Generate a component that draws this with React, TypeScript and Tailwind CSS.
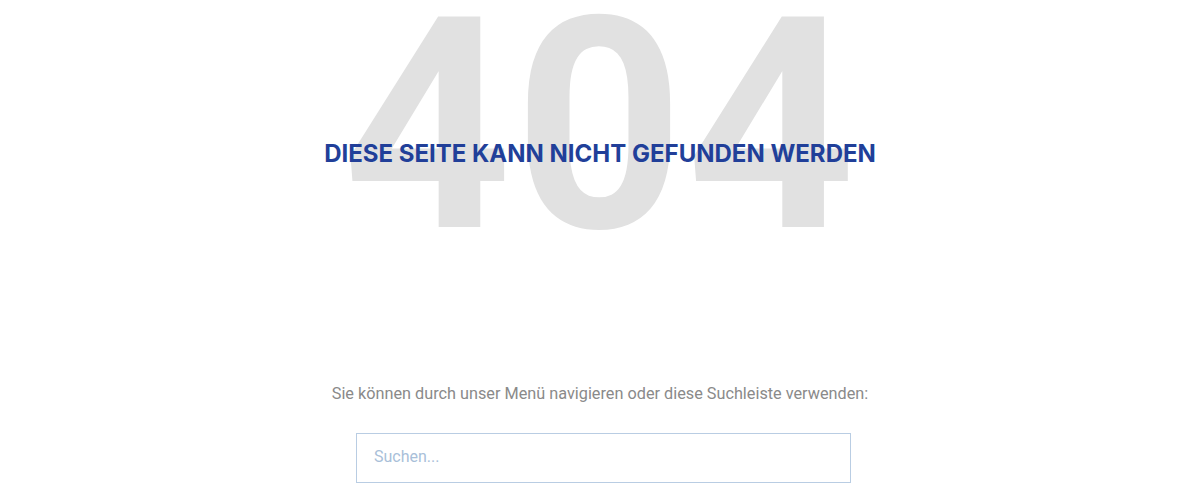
export default function App() {
  return (
    <main className="flex min-h-screen flex-col items-center bg-white font-['Roboto',sans-serif]">
      <section className="-mt-[22px] grid place-items-center">
        <span className="col-start-1 row-start-1 select-none text-[296px] font-bold leading-none tracking-[2px] text-[#e1e1e1]">
          404
        </span>
        <h1 className="col-start-1 row-start-1 mt-[160px] self-start font-['Inter',sans-serif] text-[24px] font-bold leading-8 text-[#213f99]">
          DIESE SEITE KANN NICHT GEFUNDEN WERDEN
        </h1>
      </section>

      <p className="mt-[108px] text-[16.25px] leading-6 text-[#8a8a8a]">
        Sie können durch unser Menü navigieren oder diese Suchleiste verwenden:
      </p>

      <form className="ml-[7px] mt-[27px]" onSubmit={(e) => e.preventDefault()}>
        <input
          type="search"
          placeholder="Suchen..."
          className="h-[50px] w-[495px] border border-[#b9cde3] bg-white pb-[3px] pl-[17px] pr-4 text-base text-[#555] outline-none placeholder:text-[#a9bfd9]"
        />
      </form>
    </main>
  );
}
